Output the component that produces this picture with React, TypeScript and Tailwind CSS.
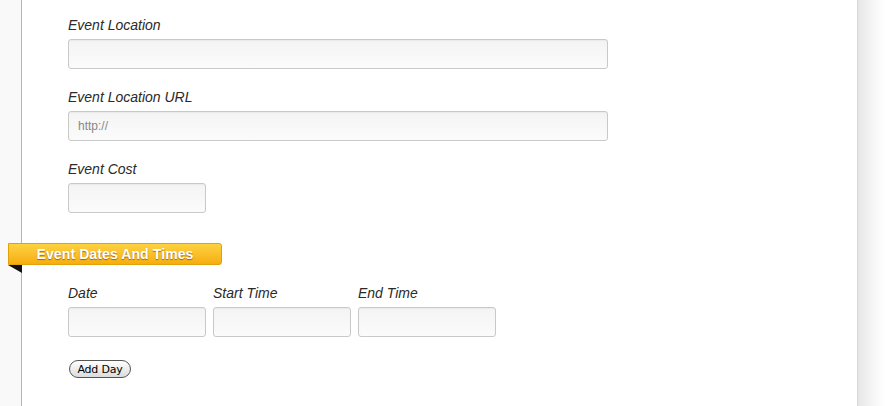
const labelCls =
  "block text-[14px] leading-[18px] italic text-[#2a2a2a] mb-[5px] [font-family:'Liberation_Sans',Arial,sans-serif]";
const inputCls =
  "block h-[30px] rounded-[3px] border border-[#c9c9c9] bg-gradient-to-b from-[#f4f4f4] to-[#fbfbfb] shadow-[inset_0_1px_1px_rgba(0,0,0,0.04)] px-[9px] text-[12px] text-[#888] outline-none placeholder:text-[#888] [font-family:'Liberation_Sans',Arial,sans-serif]";

const Field = ({ label, width, placeholder }: { label: string; width: string; placeholder?: string }) => (
  <div>
    <label className={labelCls}>{label}</label>
    <input className={`${inputCls} ${width}`} placeholder={placeholder} />
  </div>
);

export default function App() {
  return (
    <div className="w-[885px] h-[406px] flex overflow-hidden bg-white [font-family:'Liberation_Sans',Arial,sans-serif]">
      <div className="w-[22px] shrink-0 bg-[#f9f9f9] border-r border-[#b5b5b5]" />

      <div className="w-[835px] shrink-0 bg-white pt-[16px]">
        <div className="pl-[46px] flex flex-col gap-[19px]">
          <Field label="Event Location" width="w-[540px]" />
          <Field label="Event Location URL" width="w-[540px]" placeholder="http://" />
          <Field label="Event Cost" width="w-[138px]" />
        </div>

        {/* section ribbon */}
        <div className="mt-[30px] -ml-[14px]">
          <div className="w-[214px] h-[22px] flex items-center justify-center rounded-r-[3px] border border-[#e2a106] bg-gradient-to-b from-[#fdd23f] to-[#f6ad08] text-white font-bold text-[14px] tracking-[0.1px] leading-none [text-shadow:0_1px_1px_rgba(120,70,0,0.7)]">
            Event Dates And Times
          </div>
          <svg width="14" height="8" viewBox="0 0 14 8" className="block">
            <polygon points="0,0 14,0 14,8" fill="#111" />
          </svg>
        </div>

        <div className="pl-[46px] mt-[11px]">
          <div className="flex gap-[7px]">
            <Field label="Date" width="w-[138px]" />
            <Field label="Start Time" width="w-[138px]" />
            <Field label="End Time" width="w-[138px]" />
          </div>

          <button className="mt-[23px] ml-[1px] h-[18px] w-[62px] rounded-full border border-[#555] bg-gradient-to-b from-white to-[#dcdcdc] text-[11px] leading-none text-black flex items-center justify-center [font-family:'DejaVu_Sans','Liberation_Sans',sans-serif] tracking-[-0.2px]">
            Add Day
          </button>
        </div>
      </div>

      <div className="flex-1 border-l border-[#d6d6d6] bg-gradient-to-r from-[#e6e6e6] via-[#f7f7f7] via-60% to-white" />
    </div>
  );
}
